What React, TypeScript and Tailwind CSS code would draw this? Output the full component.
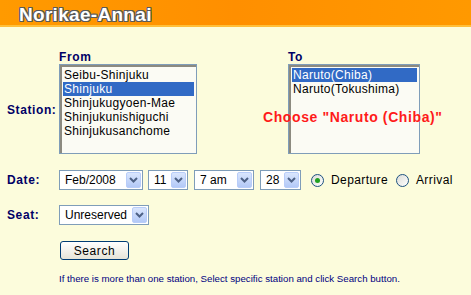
import type { ReactNode } from "react"

const label = "font-['Liberation_Sans',Arial,sans-serif] text-[12px] font-bold tracking-[0.6px] text-[#000066]"
const ui = "font-['Liberation_Sans',Arial,sans-serif] text-[12px] text-black"

function Chevron() {
  return (
    <svg width="9" height="6" viewBox="0 0 9 6" aria-hidden>
      <path d="M1 1 L4.5 4.5 L8 1" fill="none" stroke="#4d6185" strokeWidth="2" />
    </svg>
  )
}

/** Menu déroulant façon XP (bouton bleu clair à droite). */
function Select({ value, width }: { value: string; width: string }) {
  return (
    <div className={`flex h-[20px] ${width} items-stretch border border-[#7f9db9] bg-white p-[1px]`}>
      <span className={`${ui} flex-1 pl-[4px] leading-[16px]`}>{value}</span>
      <span className="flex w-[15px] items-center justify-center rounded-[2px] border border-[#b9cdf9] bg-gradient-to-b from-[#dae6fd] to-[#b3c9f7]">
        <Chevron />
      </span>
    </div>
  )
}

function Listbox({ items, selected, width }: { items: string[]; selected: number; width: string }) {
  return (
    <div className={`h-[90px] ${width} border border-[#7f9db9] bg-[#fbfbf4]`}>
      <div className="h-full border-l-2 border-t-2 border-[#8c8a80] pl-[1px] pr-[2px] pt-[1px]">
        {items.map((it, i) => (
          <div
            key={it}
            className={`${ui} h-[14px] whitespace-nowrap pl-[1px] leading-[14px] tracking-[0.3px] ${
              i === selected ? "bg-[#316ac5] text-white" : ""
            }`}
          >
            {it}
          </div>
        ))}
      </div>
    </div>
  )
}

function Radio({ checked, children }: { checked?: boolean; children: ReactNode }) {
  return (
    <label className="flex items-center">
      <span className="flex h-[13px] w-[13px] items-center justify-center rounded-full border border-[#1c5180] bg-gradient-to-br from-[#dcdcd7] to-white">
        {checked && <span className="h-[5px] w-[5px] rounded-full bg-[#21a121]" />}
      </span>
      <span className={`${ui} ml-[7px] tracking-[0.4px]`}>{children}</span>
    </label>
  )
}

function Row({ title, children, className = "", labelClass = "" }: { title: string; children: ReactNode; className?: string; labelClass?: string }) {
  return (
    <div className={`flex items-center ${className}`}>
      <div className={`${label} w-[59px] pl-[7px] ${labelClass}`}>{title}</div>
      {children}
    </div>
  )
}

export default function App() {
  return (
    <div className="h-[295px] w-[471px] overflow-hidden bg-[#fcfcdc]">
      <div className="h-[27px] border-b-2 border-[#ffbf3a] bg-gradient-to-r from-[#ff9a00] via-[#ff8f00] to-[#ff9900] pl-[19px]">
        <span className="font-['Liberation_Sans',Arial,sans-serif] text-[19px] font-bold leading-[30px] tracking-[0.3px] text-white [text-shadow:1px_0_#5a5a5a,-1px_0_#5a5a5a,0_1px_#5a5a5a,0_-1px_#5a5a5a,1px_1px_#5a5a5a,-1px_-1px_#5a5a5a,1px_-1px_#5a5a5a,-1px_1px_#5a5a5a]">
          Norikae-Annai
        </span>
      </div>

      <Row title="Station:" className="mt-[23px] items-end" labelClass="mb-[37px] leading-[14px]">
        <div className="flex">
          <div>
            <div className={`${label} leading-[14px]`}>From</div>
            <Listbox
              width="w-[138px]"
              selected={1}
              items={["Seibu-Shinjuku", "Shinjuku", "Shinjukugyoen-Mae", "Shinjukunishiguchi", "Shinjukusanchome"]}
            />
          </div>
          <div className="relative ml-[91px]">
            <div className={`${label} leading-[14px]`}>To</div>
            <Listbox width="w-[132px]" selected={0} items={["Naruto(Chiba)", "Naruto(Tokushima)"]} />
            <div className="absolute left-[-25px] top-[57px] whitespace-nowrap font-['Liberation_Sans',Arial,sans-serif] text-[14px] font-bold tracking-[0.6px] text-[#ff1a1a]">
              Choose "Naruto (Chiba)"
            </div>
          </div>
        </div>
      </Row>

      <Row title="Date:" className="mt-[16px]">
        <div className="flex items-center">
          <Select value="Feb/2008" width="w-[84px]" />
          <div className="ml-[5px]">
            <Select value="11" width="w-[40px]" />
          </div>
          <div className="ml-[6px]">
            <Select value="7 am" width="w-[60px]" />
          </div>
          <div className="ml-[6px]">
            <Select value="28" width="w-[41px]" />
          </div>
          <div className="ml-[10px] flex items-center gap-[8px]">
            <Radio checked>Departure</Radio>
            <Radio>Arrival</Radio>
          </div>
        </div>
      </Row>

      <Row title="Seat:" className="mt-[15px]">
        <Select value="Unreserved" width="w-[90px]" />
      </Row>

      <div className="ml-[60px] mt-[16px]">
        <button className={`${ui} block h-[19px] w-[69px] rounded-[3px] border border-[#003c74] bg-gradient-to-b from-white to-[#e6e4d8] tracking-[0.6px] leading-[16px]`}>
          Search
        </button>
      </div>

      <p className="ml-[59px] mt-[13px] font-['Liberation_Sans',Arial,sans-serif] text-[9.7px] leading-[12px] text-[#000080]">
        If there is more than one station, Select specific station and click Search button.
      </p>
    </div>
  )
}
